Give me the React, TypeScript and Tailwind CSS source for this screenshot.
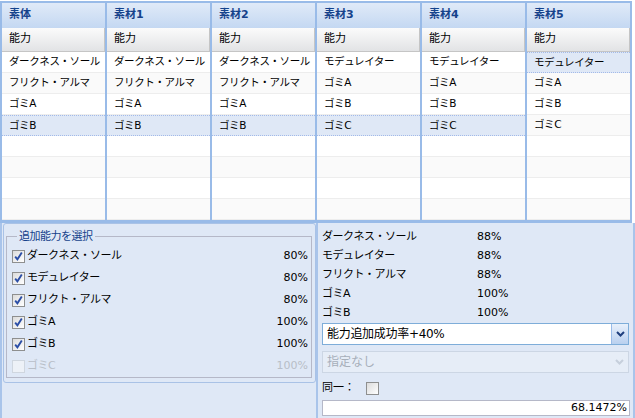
import React from "react";

const baseItems = ["ダークネス・ソール", "フリクト・アルマ", "ゴミA", "ゴミB"];
const modItems = ["モデュレイター", "ゴミA", "ゴミB", "ゴミC"];

const columns = [
  { title: "素体", items: baseItems, sel: 3 },
  { title: "素材1", items: baseItems, sel: 3 },
  { title: "素材2", items: baseItems, sel: 3 },
  { title: "素材3", items: modItems, sel: 3 },
  { title: "素材4", items: modItems, sel: 3 },
  { title: "素材5", items: modItems, sel: 0 },
];

const abilities = [
  { name: "ダークネス・ソール", rate: "80%", checked: true },
  { name: "モデュレイター", rate: "80%", checked: true },
  { name: "フリクト・アルマ", rate: "80%", checked: true },
  { name: "ゴミA", rate: "100%", checked: true },
  { name: "ゴミB", rate: "100%", checked: true },
  { name: "ゴミC", rate: "100%", checked: false, disabled: true },
];

const results = [
  { name: "ダークネス・ソール", rate: "88%" },
  { name: "モデュレイター", rate: "88%" },
  { name: "フリクト・アルマ", rate: "88%" },
  { name: "ゴミA", rate: "100%" },
  { name: "ゴミB", rate: "100%" },
];

const Check = ({ checked, disabled }: { checked?: boolean; disabled?: boolean }) => (
  <span
    className={
      disabled
        ? "flex h-[13px] w-[13px] shrink-0 border border-[#cfd6df] bg-[#edf1f7]"
        : "flex h-[13px] w-[13px] shrink-0 items-center justify-center border border-[#8e8f8f] bg-gradient-to-br from-[#dcdcdc] to-[#ffffff]"
    }
  >
    {checked && (
      <svg width="11" height="11" viewBox="0 0 11 11">
        <path d="M2.2 5.6 L4.4 8.3 L8.8 1.6" fill="none" stroke="#2b4ea6" strokeWidth="1.9" />
      </svg>
    )}
  </span>
);

const Chevron = ({ color }: { color: string }) => (
  <svg width="9" height="6" viewBox="0 0 9 6">
    <path d="M1 1 L4.5 4.5 L8 1" fill="none" stroke={color} strokeWidth="2" />
  </svg>
);

const GridColumn = ({ title, items, sel }: { title: string; items: string[]; sel: number }) => {
  const rows = [...items, "", "", "", ""];
  return (
    <div className="flex w-[103px] flex-col border-r-2 border-[#99bbe8] box-content">
      <div className="flex h-[25px] items-center bg-gradient-to-b from-[#e0eaf8] to-[#c4d8f2] pl-[7px] text-[11px] font-bold text-[#15428b]">
        {title}
      </div>
      <div className="flex h-[24px] items-center border-b border-r border-[#c5c5c5] bg-gradient-to-b from-[#fbfbfb] to-[#e2e3e5] pl-[7px] text-[11px]">
        能力
      </div>
      {rows.map((item, i) => (
        <div
          key={i}
          className={
            i === sel
              ? "flex h-[21px] items-center border-y border-dotted border-[#a3bae9] bg-[#dfe8f6] pl-[7px] text-[10.5px] tracking-[-0.4px]"
              : i % 2 === 0
              ? "flex h-[21px] items-center border-b border-[#ededed] bg-white pl-[7px] text-[10.5px] tracking-[-0.4px]"
              : "flex h-[21px] items-center border-b border-[#ededed] bg-[#fafafa] pl-[7px] text-[10.5px] tracking-[-0.4px]"
          }
        >
          {item}
        </div>
      ))}
    </div>
  );
};

export default function App() {
  return (
    <div className="h-[418px] w-[635px] overflow-hidden bg-white font-['DejaVu_Sans','Noto_Sans_CJK_JP',sans-serif] text-black">
      {/* grid */}
      <div className="mt-px flex w-[632px] border-l-2 border-t-2 border-b-[3px] border-[#99bbe8]">
        {columns.map((c) => (
          <GridColumn key={c.title} title={c.title} items={c.items} sel={c.sel} />
        ))}
      </div>

      {/* lower panels */}
      <div className="flex h-[195px]">
        <div className="w-[318px] border-l-2 border-r-2 border-[#a9c4ea] bg-[#dfe8f6] pl-px">
          <div className="rounded-[3px] border border-[#a9c2e6] pb-[4px]">
            <fieldset className="ml-[2px] mt-[6px] w-[306px] border border-[#b5b8c8] pl-[5px] pr-[3px] pt-[2px]">
              <legend className="ml-[5px] px-[2px] text-[11px] leading-[13px] tracking-[-0.5px] text-[#15428b]">
                追加能力を選択
              </legend>
              {abilities.map((a) => (
                <div key={a.name} className="flex h-[22px] items-center">
                  <Check checked={a.checked} disabled={a.disabled} />
                  <span
                    className={
                      a.disabled
                        ? "ml-[2px] flex-1 text-[11px] tracking-[-0.5px] text-[#b8bec7]"
                        : "ml-[2px] flex-1 text-[11px] tracking-[-0.5px]"
                    }
                  >
                    {a.name}
                  </span>
                  <span className={a.disabled ? "text-[11px] text-[#b8bec7]" : "text-[11px]"}>{a.rate}</span>
                </div>
              ))}
            </fieldset>
          </div>
        </div>

        <div className="w-[317px] border-r-2 border-[#a9c4ea] bg-[#dfe8f6] pl-[4px] pt-[5px]">
          {results.map((r) => (
            <div key={r.name} className="flex h-[19px] items-center text-[11px]">
              <span className="w-[155px] tracking-[-0.5px]">{r.name}</span>
              <span>{r.rate}</span>
            </div>
          ))}

          <div className="flex h-[22px] w-[307px] border border-[#7eadd9] bg-white">
            <div className="flex flex-1 items-center pl-[4px] text-[12px] tracking-[-0.3px]">能力追加成功率+40%</div>
            <div className="flex w-[17px] items-center justify-center border-l border-[#99bbe8] bg-gradient-to-b from-[#e8f0fb] to-[#b9d0ef]">
              <Chevron color="#1f3f7e" />
            </div>
          </div>

          <div className="mt-[6px] flex h-[22px] w-[307px] border border-[#ccd6e4] bg-[#e6edf7]">
            <div className="flex flex-1 items-center pl-[4px] text-[12px] text-[#a7afba]">指定なし</div>
            <div className="flex w-[17px] items-center justify-center">
              <Chevron color="#c6cfdc" />
            </div>
          </div>

          <div className="mt-[7px] flex h-[16px] items-center text-[11px]">
            <span className="w-[44px]">同一：</span>
            <Check />
          </div>

          <div className="mt-[4px] flex h-[16px] w-[308px] items-center justify-end border border-[#b5b8c8] bg-white pr-[2px] text-[11px]">
            68.1472%
          </div>
        </div>
      </div>
    </div>
  );
}
